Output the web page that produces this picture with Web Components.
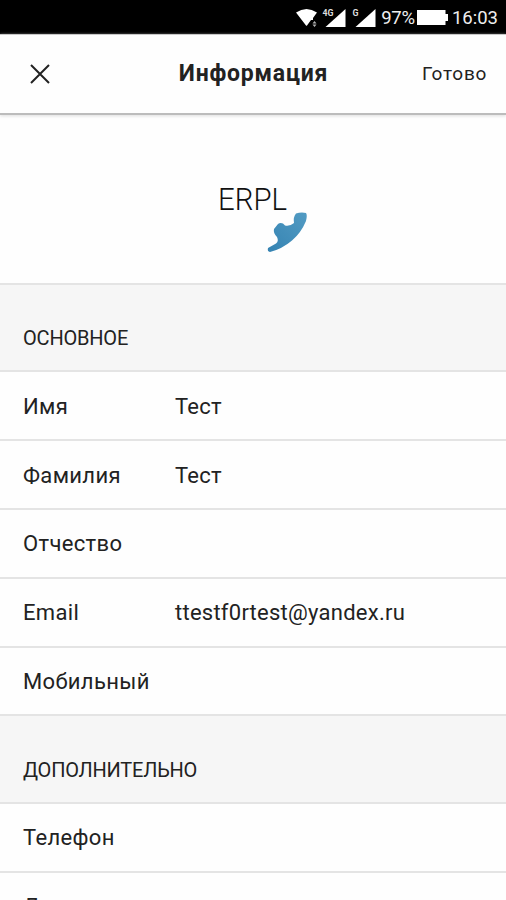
<!DOCTYPE html>
<html lang="ru">
<head>
<meta charset="utf-8">
<title>Информация</title>
<style>
    body {
        margin: 0;
        height: 900px;
        overflow: hidden;
        background: #fefefe;
        color: #222;
        font-family: Roboto, "Noto Sans", sans-serif;
    }
</style>
</head>
<body>
<profile-screen></profile-screen>

<script>
class StatusBar extends HTMLElement {
    constructor() {
        super();
        this.attachShadow({ mode: 'open' });
    }

    connectedCallback() {
        this.shadowRoot.innerHTML = `
            <style>
                :host {
                    display: flex;
                    align-items: center;
                    height: 34px;
                    box-sizing: border-box;
                    padding: 2px 8px 0 0;
                    justify-content: flex-end;
                    background: #000;
                    color: #eee;
                    font-size: 18.5px;
                    line-height: 32px;
                }
                svg { display: block; fill: #fff; }
                .wifi { margin-right: 4px; }
                .signal { margin-right: 6px; }
                .signal.last { margin-right: 5px; }
                .battery { margin: 0 4px 0 2px; }
                .tag { font-size: 9px; font-weight: bold; fill: #ddd; }
                .charge { letter-spacing: -.2px; }
            </style>
            <svg class="wifi" width="22" height="20" viewBox="0 0 22 20">
                <path d="M0 4.500Q10.500-2.500 21 4.500L17 10V12H15L11 17.500Q10.500 18 10 17.500Z"/>
                <path d="M18.500 13l2 2.500h-4zM18.500 19l2-2.500h-4z" opacity=".7"/>
            </svg>
            <svg class="signal" width="24" height="20" viewBox="0 0 24 20">
                <path d="M23.500 1V19H3.500Z"/>
                <path d="M0 0h12v9H0z" fill="#000"/>
                <text class="tag" x="0.500" y="8" textLength="11" lengthAdjust="spacingAndGlyphs">4G</text>
            </svg>
            <svg class="signal last" width="24" height="20" viewBox="0 0 24 20">
                <path d="M23.500 1V19H3.500Z"/>
                <text class="tag" x="0.500" y="8" textLength="6" lengthAdjust="spacingAndGlyphs">G</text>
            </svg>
            <span class="charge"><slot name="charge"></slot></span>
            <svg class="battery" width="31" height="18" viewBox="0 0 31 18">
                <path d="M0 1h28.500v4H31v7h-2.500v4H0z"/>
            </svg>
            <span><slot name="time"></slot></span>
        `;
    }
}

class TitleBar extends HTMLElement {
    constructor() {
        super();
        this.attachShadow({ mode: 'open' });
    }

    connectedCallback() {
        this.shadowRoot.innerHTML = `
            <style>
                :host {
                    display: grid;
                    grid-template-columns: 1fr auto 1fr;
                    align-items: center;
                    height: 81px;
                    box-sizing: border-box;
                    padding: 0 19px 0 30px;
                    border-top: 1px solid #c8c8c8;
                    border-bottom: 2px solid #bcbcbc;
                    background: #fefefe;
                    box-shadow: 0 1px 3px #ddd;
                }
                svg {
                    display: block;
                    fill: none;
                    stroke: #222;
                    stroke-width: 2;
                }
                h1 {
                    margin: 0 0 0 -10px;
                    font-size: 23px;
                    font-weight: bold;
                    line-height: 28px;
                    letter-spacing: .8px;
                }
                .action {
                    justify-self: end;
                    margin-bottom: 2px;
                    font-size: 19px;
                    letter-spacing: .7px;
                }
            </style>
            <svg width="20" height="20" viewBox="0 0 20 20">
                <path d="M1 1L19 19M19 1L1 19"/>
            </svg>
            <h1><slot></slot></h1>
            <span class="action"><slot name="action"></slot></span>
        `;
    }
}

class CompanyLogo extends HTMLElement {
    constructor() {
        super();
        this.attachShadow({ mode: 'open' });
    }

    connectedCallback() {
        this.shadowRoot.innerHTML = `
            <style>
                :host {
                    display: flex;
                    justify-content: center;
                    align-items: center;
                    height: 168px;
                }
                svg { display: block; }
                text { font-size: 30.500px; font-weight: 300; fill: #111; }
            </style>
            <svg width="140" height="130" viewBox="0 0 140 130">
                <defs>
                    <linearGradient id="handset" x1="0" y1="1" x2="1" y2="0">
                        <stop offset="0" stop-color="#3583b2"/>
                        <stop offset="1" stop-color="#529bc3"/>
                    </linearGradient>
                </defs>
                <text x="35" y="75.500" textLength="69" lengthAdjust="spacingAndGlyphs">ERPL</text>
                <path fill="url(#handset)" d="M113 79.500Q118 78 123 79Q124.500 81 123 87Q118 99 109 106.500Q99 115 87 118Q84 117.500 85 114L93 109.500Q96 107 94 103Q90 99 91 95L95 90Q97 88.500 100 89.500L102 91.500Q107 92.500 111 89Q110 83 113 79.500Z"/>
            </svg>
        `;
    }
}

class FieldSection extends HTMLElement {
    constructor() {
        super();
        this.attachShadow({ mode: 'open' });
    }

    connectedCallback() {
        this.shadowRoot.innerHTML = `
            <style>
                :host { display: block; }
                h2 {
                    display: flex;
                    align-items: flex-end;
                    height: 87.400px;
                    margin: 0;
                    box-sizing: border-box;
                    padding: 0 23px 20px;
                    border-top: 2px solid #e4e4e4;
                    background: #f6f6f6;
                    font-size: 20px;
                    font-weight: normal;
                    line-height: 24px;
                    letter-spacing: -.2px;
                }
            </style>
            <h2>${this.getAttribute('caption')}</h2>
            <slot></slot>
        `;
    }
}

class FieldRow extends HTMLElement {
    constructor() {
        super();
        this.attachShadow({ mode: 'open' });
    }

    connectedCallback() {
        this.shadowRoot.innerHTML = `
            <style>
                :host {
                    display: grid;
                    grid-template-columns: 152px 1fr;
                    align-items: center;
                    height: 68.800px;
                    box-sizing: border-box;
                    padding: 2px 23px 0;
                    border-top: 2px solid #e4e4e4;
                    background: #fefefe;
                    font-size: 22px;
                    line-height: 28px;
                    white-space: nowrap;
                }
                .label { letter-spacing: .35px; }
                .value { letter-spacing: .25px; }
            </style>
            <span class="label">${this.getAttribute('label')}</span>
            <span class="value"><slot></slot></span>
        `;
    }
}

class ProfileScreen extends HTMLElement {
    constructor() {
        super();
        this.attachShadow({ mode: 'open' });
    }

    connectedCallback() {
        this.shadowRoot.innerHTML = `
            <style>
                :host { display: block; }
            </style>
            <status-bar>
                <span slot="charge">97%</span>
                <span slot="time">16:03</span>
            </status-bar>
            <title-bar>Информация<span slot="action">Готово</span></title-bar>
            <company-logo></company-logo>
            <field-section caption="ОСНОВНОЕ">
                <field-row label="Имя">Тест</field-row>
                <field-row label="Фамилия">Тест</field-row>
                <field-row label="Отчество"></field-row>
                <field-row label="Email">ttestf0rtest@yandex.ru</field-row>
                <field-row label="Мобильный"></field-row>
            </field-section>
            <field-section caption="ДОПОЛНИТЕЛЬНО">
                <field-row label="Телефон"></field-row>
                <field-row label="Должность"></field-row>
            </field-section>
        `;
    }
}

customElements.define('status-bar', StatusBar);
customElements.define('title-bar', TitleBar);
customElements.define('company-logo', CompanyLogo);
customElements.define('field-section', FieldSection);
customElements.define('field-row', FieldRow);
customElements.define('profile-screen', ProfileScreen);
</script>
</body>
</html>
